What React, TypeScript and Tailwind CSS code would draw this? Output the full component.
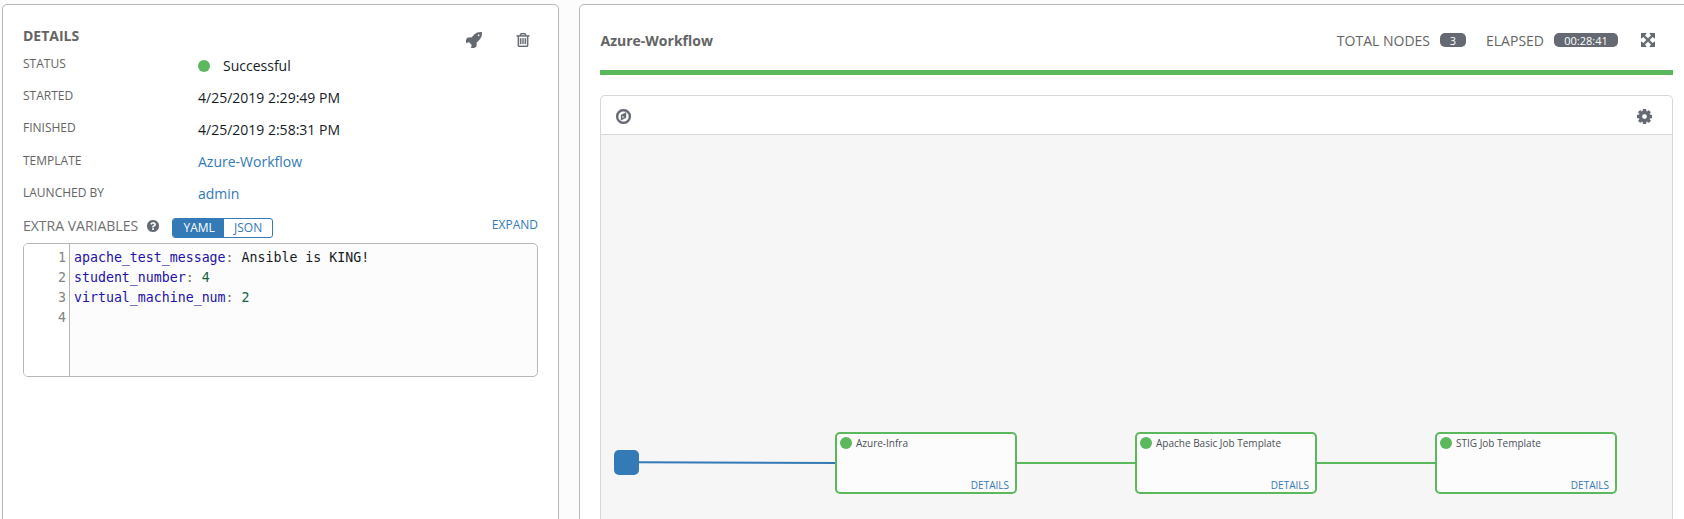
import React from "react";

const ICONS = {
  rocket:
    "M1440 448q0-40-28-68t-68-28-68 28-28 68 28 68 68 28 68-28 28-68zm224-288q0 249-75.5 430.5t-253.5 360.5q-81 80-195 176l-20 379q-2 16-16 26l-384 224q-7 4-16 4-12 0-23-9l-64-64q-13-14-8-32l85-276-281-281-276 85q-3 1-9 1-14 0-23-9l-64-64q-17-19-5-39l224-384q10-14 26-16l379-20q96-114 176-195 188-187 358-258t431-71q14 0 24 9.5t10 22.5z",
  trash:
    "M704 736v576q0 14-9 23t-23 9h-64q-14 0-23-9t-9-23v-576q0-14 9-23t23-9h64q14 0 23 9t9 23zm256 0v576q0 14-9 23t-23 9h-64q-14 0-23-9t-9-23v-576q0-14 9-23t23-9h64q14 0 23 9t9 23zm256 0v576q0 14-9 23t-23 9h-64q-14 0-23-9t-9-23v-576q0-14 9-23t23-9h64q14 0 23 9t9 23zm128 724v-948h-896v948q0 22 7 40.5t14.5 27 10.5 8.5h832q3 0 10.5-8.5t14.5-27 7-40.5zm-672-1076h448l-48-117q-7-9-17-11h-317q-10 2-17 11zm928 32v64q0 14-9 23t-23 9h-96v948q0 83-47 143.5t-113 60.5h-832q-66 0-113-58.5t-47-141.5v-952h-96q-14 0-23-9t-9-23v-64q0-14 9-23t23-9h309l70-167q15-37 54-63t79-26h320q40 0 79 26t54 63l70 167h309q14 0 23 9t9 23z",
  expand:
    "M1411 541l-355 355 355 355 144-144q29-31 70-14 39 17 39 59v448q0 26-19 45t-45 19h-448q-42 0-59-40-17-39 14-69l144-144-355-355-355 355 144 144q31 30 14 69-17 40-59 40h-448q-26 0-45-19t-19-45v-448q0-42 40-59 39-17 69 14l144 144 355-355-355-355-144 144q-19 19-45 19-12 0-24-5-40-17-40-59v-448q0-26 19-45t45-19h448q42 0 59 40 17 39-14 69l-144 144 355 355 355-355-144-144q-31-30-14-69 17-40 59-40h448q26 0 45 19t19 45v448q0 42-39 59-13 5-25 5-26 0-45-19z",
  compass:
    "M768 1070l256-128-256-128zM1152 482v542l-512 256v-542zM896 352a544 544 0 1 0 0 1088a544 544 0 1 0 0-1088zM896 128a768 768 0 1 1 0 1536a768 768 0 1 1 0-1536z",
  cog: "M1152 896q0-106-75-181t-181-75-181 75-75 181 75 181 181 75 181-75 75-181zm512-109v222q0 12-8 23t-20 13l-185 28q-19 54-39 91 35 50 107 138 10 12 10 25t-9 23q-27 37-99 108t-94 71q-12 0-26-9l-138-108q-44 23-91 38-16 136-29 186-7 28-36 28h-222q-14 0-24.5-8.5t-11.5-21.5l-28-184q-49-16-90-37l-141 107q-10 9-25 9-14 0-25-11-126-114-165-168-7-10-7-23 0-12 8-23 15-21 51-66.5t54-70.5q-27-50-41-99l-183-27q-13-2-21-12.5t-8-23.5v-222q0-12 8-23t19-13l186-28q14-46 39-92-40-57-107-138-10-12-10-24 0-10 9-23 26-36 98.5-107.5t94.5-71.5q13 0 26 10l138 107q44-23 91-38 16-136 29-186 7-28 36-28h222q14 0 24.5 8.5t11.5 21.5l28 184q49 16 90 37l142-107q9-9 24-9 13 0 25 10 129 119 165 170 7 8 7 22 0 12-8 23-15 21-51 66.5t-54 70.5q26 50 41 98l183 28q13 2 21 12.5t8 23.5z",
  question:
    "M1024 1376v-192q0-14-9-23t-23-9h-192q-14 0-23 9t-9 23v192q0 14 9 23t23 9h192q14 0 23-9t9-23zm256-672q0-88-55.5-163t-138.5-116-170-41q-243 0-371 213-15 24 8 42l132 100q7 6 19 6 16 0 25-12 53-68 86-92 34-24 86-24 48 0 85.5 26t37.5 59q0 38-20 61t-68 45q-63 28-115.5 86.5t-52.5 125.5v36q0 14 9 23t23 9h192q14 0 23-9t9-23q0-19 21.5-49.5t54.5-49.5q32-18 49-28.5t46-35 44.5-48 28-60.5 12.5-81zm384 192q0 209-103 385.5t-279.5 279.5-385.5 103-385.5-103-279.5-279.5-103-385.5 103-385.5 279.5-279.5 385.5-103 385.5 103 279.5 279.5 103 385.5z",
};

function Icon({ name, className }: { name: keyof typeof ICONS; className: string }) {
  return (
    <svg viewBox="128 128 1536 1536" className={className} fill="currentColor" stroke="currentColor" strokeWidth="30" fillRule={name === "compass" ? "evenodd" : "nonzero"}>
      <path d={ICONS[name]} />
    </svg>
  );
}

function Row({ label, height, pad = "pt-[2px]", children }: { label: string; height: string; pad?: string; children: React.ReactNode }) {
  return (
    <div className={`flex ${height}`}>
      <div className="w-[175px] pt-[1px] text-[12px] leading-[17px] text-[#646464]">{label}</div>
      <div className={`flex items-center self-start ${pad} text-[14px] leading-5 text-[#161b1f]`}>{children}</div>
    </div>
  );
}

function CodeLine({ n, name, children }: { n: number; name?: string; children?: React.ReactNode }) {
  return (
    <div className="flex h-5">
      <span className="w-[46px] shrink-0 pr-[4px] text-right text-[#848484]">{n}</span>
      <span className="whitespace-pre pl-[4px] text-[#161b1f]">
        {name && <span className="text-[#2211aa]">{name}</span>}
        {name && <span className="text-[#707070]">: </span>}
        {children}
      </span>
    </div>
  );
}

function Node({ title, left }: { title: string; left: string }) {
  return (
    <div className={`absolute top-[297px] ${left} flex h-[62px] w-[182px] flex-col justify-between rounded-[5px] border-2 border-[#5cb85c] bg-[#fcfcfc]`}>
      <div className="flex items-center pl-[3px] pt-[3px]">
        <span className="size-3 rounded-full bg-[#5cb85c]" />
        <span className="ml-1 text-[10px] leading-3 text-[#4b5057]">{title}</span>
      </div>
      <a className="self-end pr-[6px] text-[10px] leading-[14px] text-[#337ab7]">DETAILS</a>
    </div>
  );
}

export default function App() {
  return (
    <div className="flex h-[519px] w-[1684px] overflow-hidden bg-[#fcfcfc] pl-[2px] pt-1 font-['Open_Sans',sans-serif]">
      <section className="h-[560px] w-[557px] shrink-0 rounded-[5px] border border-[#b7b7b7] bg-white px-5">
        <div className="flex h-[49px] justify-between">
          <h1 className="pt-[21px] text-[14px] font-bold leading-5 text-[#646464]">DETAILS</h1>
          <div className="flex gap-[34px] pr-[8px] pt-[27px] text-[#646972]">
            <Icon name="rocket" className="size-4" />
            <Icon name="trash" className="mt-[1px] size-[14px]" />
          </div>
        </div>
        <Row label="STATUS" height="h-8">
          <span className="mr-[13px] size-3 rounded-full bg-[#5cb85c]" />
          Successful
        </Row>
        <Row label="STARTED" height="h-8">4/25/2019 2:29:49 PM</Row>
        <Row label="FINISHED" height="h-[33px]">4/25/2019 2:58:31 PM</Row>
        <Row label="TEMPLATE" height="h-8" pad="pt-[1px]"><span className="text-[#337ab7]">Azure-Workflow</span></Row>
        <Row label="LAUNCHED BY" height="h-8" pad="pt-[1px]"><span className="text-[#337ab7]">admin</span></Row>
        <div className="flex h-[28px] items-start">
          <span className="pt-[1px] text-[14px] leading-5 text-[#707070]">EXTRA VARIABLES</span>
          <Icon name="question" className="ml-[9px] mt-[5px] size-3 text-[#646972]" />
          <div className="ml-[13px] mt-[3px] flex h-5 w-[101px] overflow-hidden rounded-[3px] border border-[#337ab7] text-[12px] leading-[18px]">
            <span className="w-[51px] pl-[1px] bg-[#337ab7] text-center text-white">YAML</span>
            <span className="flex-1 text-center text-[#337ab7]">JSON</span>
          </div>
          <span className="ml-auto pt-[1px] text-[12px] leading-[18px] text-[#337ab7]">EXPAND</span>
        </div>
        <div className="relative h-[134px] overflow-hidden rounded-[5px] border border-[#b7b7b7] bg-[#fcfcfc] pt-1 font-['DejaVu_Sans_Mono',monospace] text-[13.25px] leading-5">
          <div className="absolute inset-y-0 left-0 w-[46px] border-r border-[#b7b7b7] bg-white" />
          <div className="relative">
            <CodeLine n={1} name="apache_test_message">Ansible is KING!</CodeLine>
            <CodeLine n={2} name="student_number"><span className="text-[#116644]">4</span></CodeLine>
            <CodeLine n={3} name="virtual_machine_num"><span className="text-[#116644]">2</span></CodeLine>
            <CodeLine n={4} />
          </div>
        </div>
      </section>

      <section className="ml-5 h-[560px] w-[1115px] shrink-0 rounded-[5px] border border-[#b7b7b7] bg-white pl-5">
        <div className="w-[1073px]">
          <header className="flex h-[65px] items-center pt-[6px] text-[14px] leading-5 text-[#646464]">
            <h2 className="pl-[0.5px] font-bold">Azure-Workflow</h2>
            <span className="ml-auto">TOTAL NODES</span>
            <span className="mb-[1px] ml-[10px] h-[14px] w-[26px] rounded-[5px] bg-[#646972] text-center text-[11px] leading-[15px] text-white">3</span>
            <span className="ml-5">ELAPSED</span>
            <span className="mb-[1px] ml-[10px] h-[14px] w-16 rounded-[5px] bg-[#646972] text-center text-[11px] leading-[15px] text-white">00:28:41</span>
            <Icon name="expand" className="mb-[1px] ml-[23px] mr-[18px] size-[14px] text-[#646972]" />
          </header>
          <div className="h-[5px] bg-[#5cb85c]" />
          <div className="mt-5 h-[460px] rounded-[5px] border border-[#d7d7d7]">
            <div className="flex h-[39px] items-center justify-between border-b border-[#d7d7d7] pl-[15px] pr-5 pt-[3px] text-[#646972]">
              <Icon name="compass" className="size-[15px]" />
              <Icon name="cog" className="size-[15px]" />
            </div>
            <div className="relative h-[420px] bg-[#f6f6f6]">
              <svg className="absolute left-0 top-0 h-[420px] w-[1071px]" strokeWidth="2" fill="none">
                <path d="M37 327.3L236 328" stroke="#337ab7" />
                <path d="M416 328H536M716 328H836" stroke="#5cb85c" />
              </svg>
              <div className="absolute left-[13px] top-[315px] size-[25px] rounded-[5px] bg-[#337ab7]" />
              <Node title="Azure-Infra" left="left-[234px]" />
              <Node title="Apache Basic Job Template" left="left-[534px]" />
              <Node title="STIG Job Template" left="left-[834px]" />
            </div>
          </div>
        </div>
      </section>
    </div>
  );
}
